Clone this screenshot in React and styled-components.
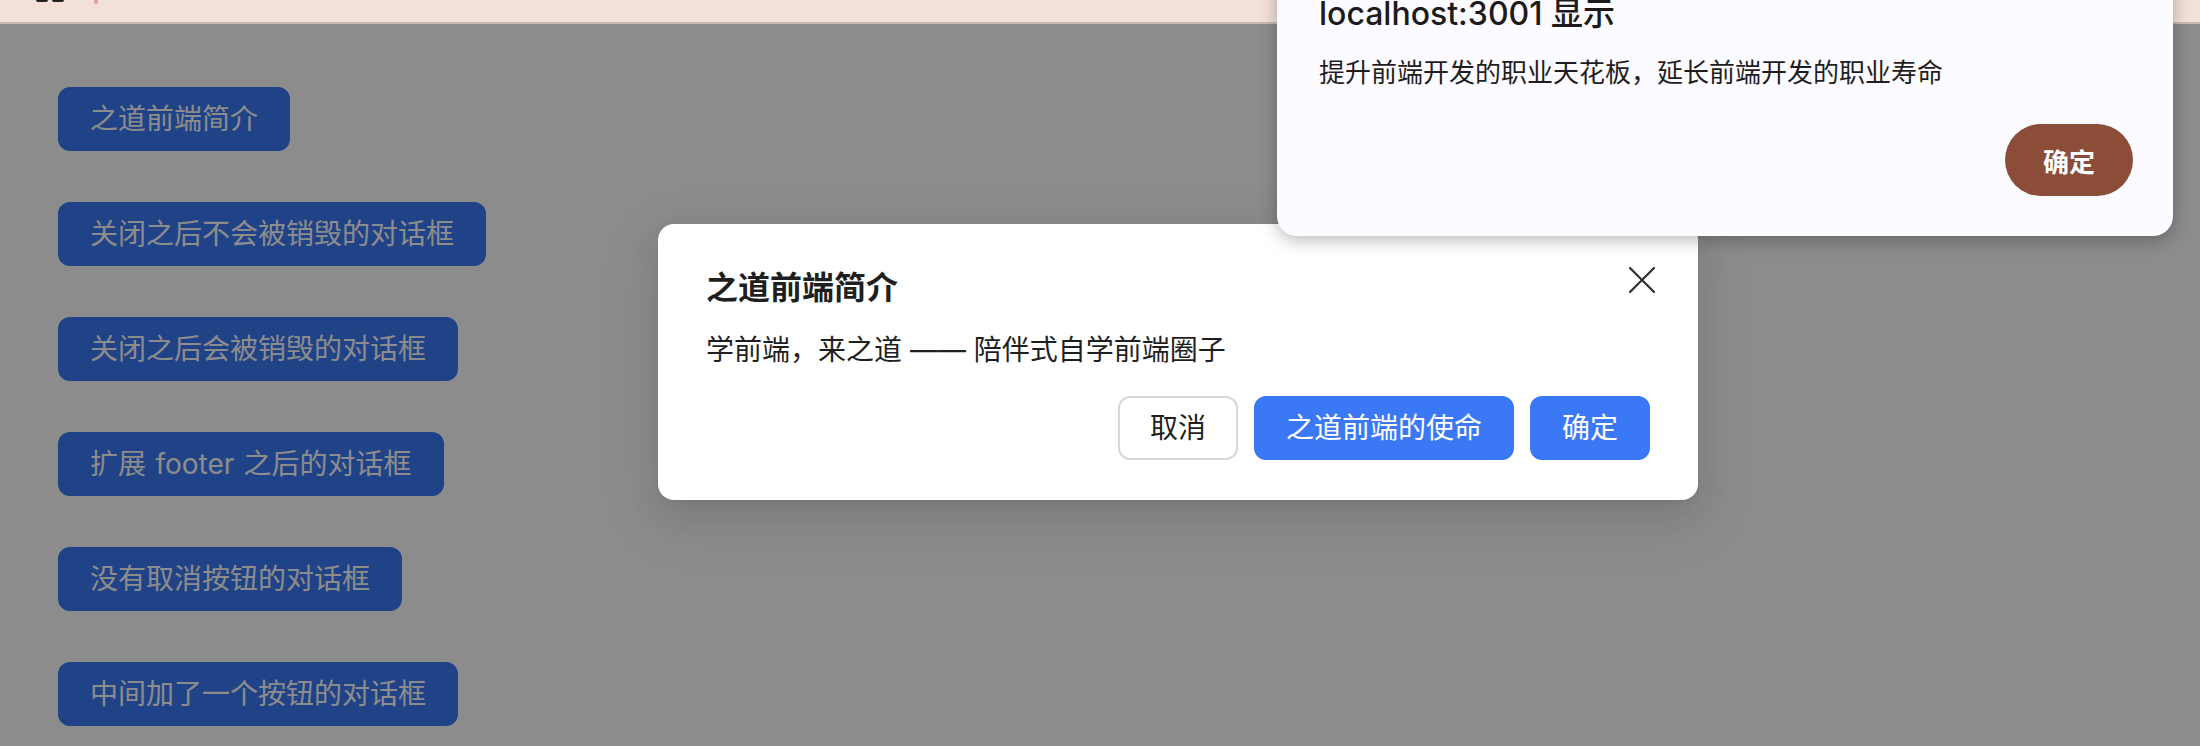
import React from "react";
import styled, { createGlobalStyle } from "styled-components";

const GlobalStyle = createGlobalStyle`
  html, body {
    margin: 0;
    padding: 0;
    background: #ffffff;
  }
  body {
    font-family: "Inter", "Noto Sans CJK SC", sans-serif;
  }
  * {
    box-sizing: border-box;
  }
`;

const Screen = styled.div`
  position: relative;
  width: 2200px;
  height: 746px;
  overflow: hidden;
`;

const BrowserBar = styled.div`
  display: flex;
  align-items: flex-start;
  height: 24px;
  padding-left: 36px;
  background: #f3e1d9;
  border-bottom: 2px solid #c8bbb5;
`;

const BarMark = styled.span`
  display: block;
  width: ${(props) => props.w}px;
  height: ${(props) => props.h}px;
  margin-right: ${(props) => props.gap}px;
  background: ${(props) => props.color};
  border-radius: 0 0 2px 2px;
`;

const Page = styled.div`
  position: relative;
  height: 722px;
  padding: 63px 0 0 58px;
  background: #ffffff;
`;

const ButtonList = styled.div`
  display: flex;
  flex-direction: column;
  align-items: flex-start;
  gap: 51px;
`;

const Button = styled.button`
  display: inline-flex;
  align-items: center;
  justify-content: center;
  height: 64px;
  padding: 8px 30px;
  font-family: "Inter", "Noto Sans CJK SC", sans-serif;
  font-size: 28px;
  line-height: 44px;
  word-spacing: 1.5px;
  white-space: pre;
  border-radius: 12px;
  border: 2px solid ${(props) => (props.primary ? "#3b78f6" : "#d9d9d9")};
  background: ${(props) => (props.primary ? "#3b78f6" : "#ffffff")};
  color: ${(props) => (props.primary ? "#ffffff" : "#1f1f1f")};
  cursor: pointer;
`;

const Mask = styled.div`
  position: absolute;
  inset: 0;
  background: rgba(0, 0, 0, 0.45);
`;

const Modal = styled.div`
  position: absolute;
  top: 200px;
  left: 658px;
  width: 1040px;
  padding: 40px 48px;
  background: #ffffff;
  border-radius: 16px;
  box-shadow: 0 12px 32px 0 rgba(0, 0, 0, 0.08),
    0 6px 12px -8px rgba(0, 0, 0, 0.12), 0 18px 56px 16px rgba(0, 0, 0, 0.05);
`;

const ModalTitle = styled.div`
  font-size: 32px;
  font-weight: 600;
  line-height: 48px;
  color: #1f1f1f;
`;

const CloseButton = styled.button`
  position: absolute;
  top: 34px;
  right: 34px;
  width: 44px;
  height: 44px;
  display: flex;
  align-items: center;
  justify-content: center;
  padding: 0;
  border: none;
  background: transparent;
  cursor: pointer;
`;

const ModalBody = styled.div`
  margin-top: 16px;
  font-size: 28px;
  line-height: 44px;
  color: #1f1f1f;
`;

const ModalFooter = styled.div`
  display: flex;
  justify-content: flex-end;
  gap: 16px;
  margin-top: 24px;
`;

const Alert = styled.div`
  position: absolute;
  top: -24px;
  right: 27px;
  width: 896px;
  padding: 18px 40px 40px 42px;
  background: #fcfbff;
  border-radius: 0 0 20px 20px;
  box-shadow: 0 4px 18px rgba(0, 0, 0, 0.28);
`;

const AlertTitle = styled.div`
  font-family: "Inter", "Noto Sans CJK SC", sans-serif;
  font-size: 32px;
  font-weight: 500;
  line-height: 40px;
  color: #1c1a1a;
`;

const AlertMessage = styled.div`
  margin-top: 19px;
  font-size: 26px;
  line-height: 40px;
  color: #1f1d1d;
`;

const AlertActions = styled.div`
  display: flex;
  justify-content: flex-end;
  margin-top: 31px;
`;

const AlertButton = styled.button`
  width: 128px;
  height: 72px;
  border: none;
  border-radius: 36px;
  background: #8b4c38;
  color: #ffffff;
  font-family: "Inter", "Noto Sans CJK SC", sans-serif;
  font-size: 26px;
  font-weight: 700;
  cursor: pointer;
`;

const pageButtons = [
  "之道前端简介",
  "关闭之后不会被销毁的对话框",
  "关闭之后会被销毁的对话框",
  "扩展 footer 之后的对话框",
  "没有取消按钮的对话框",
  "中间加了一个按钮的对话框",
];

const CloseIcon = () => (
  <svg width="26" height="26" viewBox="0 0 26 26">
    <path
      d="M1 1 L25 25 M25 1 L1 25"
      stroke="#2f2f2f"
      strokeWidth="2.2"
      strokeLinecap="round"
    />
  </svg>
);

const App = () => (
  <Screen>
    <GlobalStyle />
    <BrowserBar>
      <BarMark w={12} h={2} gap={4} color="#222" />
      <BarMark w={12} h={2} gap={30} color="#222" />
      <BarMark w={4} h={4} gap={0} color="#e0a590" />
    </BrowserBar>
    <Page>
      <ButtonList>
        {pageButtons.map((label) => (
          <Button primary key={label}>
            {label}
          </Button>
        ))}
      </ButtonList>
      <Mask />
      <Modal>
        <ModalTitle>之道前端简介</ModalTitle>
        <CloseButton aria-label="close">
          <CloseIcon />
        </CloseButton>
        <ModalBody>学前端，来之道 —— 陪伴式自学前端圈子</ModalBody>
        <ModalFooter>
          <Button>取消</Button>
          <Button primary>之道前端的使命</Button>
          <Button primary>确定</Button>
        </ModalFooter>
      </Modal>
    </Page>
    <Alert>
      <AlertTitle>localhost:3001 显示</AlertTitle>
      <AlertMessage>提升前端开发的职业天花板，延长前端开发的职业寿命</AlertMessage>
      <AlertActions>
        <AlertButton>确定</AlertButton>
      </AlertActions>
    </Alert>
  </Screen>
);

export default App;
